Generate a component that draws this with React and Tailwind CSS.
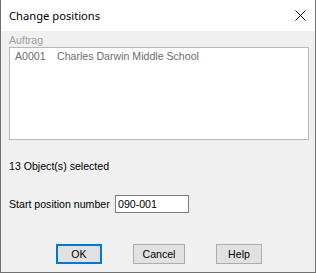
export default function App() {
  return (
    <div className="w-[316px] h-[273px] flex flex-col bg-[#f0f0f0] border-x border-b border-[#707070] font-['Liberation_Sans',Arial,sans-serif] text-[10.6px] text-black">
      {/* title bar */}
      <div className="h-[31px] bg-white flex items-center justify-between pl-[8px] pr-[9px]">
        <span className="font-['Noto_Sans',sans-serif] text-[11.2px] leading-[16px] text-black">Change positions</span>
        <svg width="11" height="11" viewBox="0 0 11 11" className="mt-[-1px]">
          <path d="M0.5 0.5 L10.5 10.5 M10.5 0.5 L0.5 10.5" stroke="#000" strokeWidth="1" />
        </svg>
      </div>

      <div className="flex flex-col pl-[8px] pr-[6px]">
        <div className="mt-[3px] leading-[13px] text-[#a0a0a0]">Auftrag</div>
        <div className="h-[93px] bg-white border border-[#b9b9b9] pl-[5px] pt-[2px]">
          <div className="leading-[13px] text-[#6d6d6d] flex">
            <span className="w-[42px]">A0001</span>
            <span>Charles Darwin Middle School</span>
          </div>
        </div>

        <div className="mt-[20px] leading-[13px]">13 Object(s) selected</div>

        <div className="mt-[22px] flex items-center">
          <span className="w-[106px] leading-[13px]">Start position number</span>
          <div className="w-[74px] h-[18px] bg-white border border-[#7a7a7a] pl-[2px] flex items-center leading-[13px]">
            090-001
          </div>
        </div>

        <div className="mt-[31px] flex pl-[47px] gap-[31px]">
          <button className="w-[46px] h-[20px] bg-[#e1e1e1] border-2 border-[#0078d7] leading-[13px]">OK</button>
          <button className="w-[52px] h-[20px] bg-[#e1e1e1] border border-[#adadad] leading-[13px]">Cancel</button>
          <button className="w-[46px] h-[20px] bg-[#e1e1e1] border border-[#adadad] leading-[13px]">Help</button>
        </div>
      </div>
    </div>
  );
}
